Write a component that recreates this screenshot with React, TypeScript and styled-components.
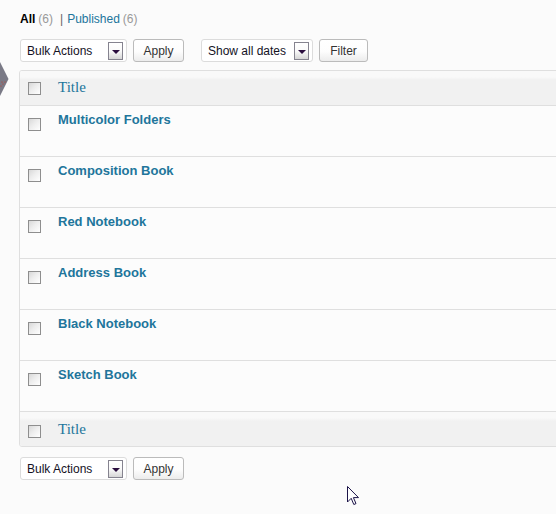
import React from "react";
import styled, { createGlobalStyle } from "styled-components";

const GlobalStyle = createGlobalStyle`
  html, body { margin: 0; padding: 0; background: #fbfbfb; overflow: hidden; }
  body { font-family: "Liberation Sans", Arial, sans-serif; font-size: 12px; color: #333; }
`;

const Page = styled.div`
  position: relative;
  width: 556px;
  height: 514px;
  box-sizing: border-box;
  padding: 12px 0 0 20px;
  overflow: hidden;
`;

const SubSub = styled.div`
  display: flex;
  align-items: baseline;
  height: 14px;
  line-height: 14px;
  font-size: 12px;
`;

const Current = styled.span`
  font-weight: bold;
  color: #000;
`;

const Count = styled.span`
  color: #999;
  margin-left: 3px;
`;

const Sep = styled.span`
  color: #666;
  margin: 0 4px 0 7px;
`;

const Link = styled.a`
  color: #21759b;
  text-decoration: none;
`;

const Toolbar = styled.div<{ $top: number }>`
  display: flex;
  align-items: center;
  height: 23px;
  margin-top: ${(p) => p.$top}px;
`;

const Select = styled.div<{ $w: number; $ml?: number }>`
  display: flex;
  align-items: center;
  justify-content: space-between;
  box-sizing: border-box;
  width: ${(p) => p.$w}px;
  height: 23px;
  margin-left: ${(p) => p.$ml ?? 0}px;
  padding: 0 3px 0 6px;
  border: 1px solid #dcdcdc;
  border-radius: 3px;
  background: #fff;
  color: #14121f;
  font-size: 12px;
`;

const ArrowBox = styled.span`
  display: flex;
  align-items: center;
  justify-content: center;
  box-sizing: border-box;
  width: 15px;
  height: 18px;
  padding-top: 3px;
  border: 1px solid #85838f;
  background: linear-gradient(#ffffff 0, #fafafa 50%, #d6d6d6 100%);
`;

const Triangle = styled.span`
  width: 0;
  height: 0;
  border-left: 4px solid transparent;
  border-right: 4px solid transparent;
  border-top: 4px solid #2a0d3e;
`;

const Button = styled.button<{ $w: number; $ml: number }>`
  box-sizing: border-box;
  width: ${(p) => p.$w}px;
  height: 23px;
  margin-left: ${(p) => p.$ml}px;
  padding: 0;
  border: 1px solid #bbbbbb;
  border-radius: 3px;
  background: linear-gradient(#ffffff 0, #fdfdfd 55%, #ececec 100%);
  font-family: "Liberation Sans", Arial, sans-serif;
  font-size: 12px;
  color: #333;
`;

const Table = styled.div`
  margin: 8px 0 0 -1px;
  width: 560px;
  border: 1px solid #dfdfdf;
  border-radius: 3px;
  background: #fcfcfc;
  overflow: hidden;
`;

const HeadRow = styled.div<{ $foot?: boolean }>`
  display: flex;
  align-items: flex-start;
  box-sizing: border-box;
  height: ${(p) => (p.$foot ? 34 : 35)}px;
  background: linear-gradient(#f9f9f9 0, #f9f9f9 6px, #f1f1f1 9px, #f1f1f1 100%);
  border-bottom: ${(p) => (p.$foot ? "none" : "1px solid #dfdfdf")};
`;

const Row = styled.div`
  display: flex;
  align-items: flex-start;
  box-sizing: border-box;
  height: 51px;
  border-bottom: 1px solid #dfdfdf;
`;

const CheckCell = styled.div<{ $top: number }>`
  box-sizing: border-box;
  width: 38px;
  padding: ${(p) => p.$top}px 0 0 8px;
`;

const Checkbox = styled.span`
  display: block;
  box-sizing: border-box;
  width: 13px;
  height: 13px;
  border: 1px solid #8e8e8e;
  background: linear-gradient(135deg, #d8d8d8 0, #ededed 45%, #ffffff 100%);
`;

const HeadTitle = styled.div<{ $top: number }>`
  padding-top: ${(p) => p.$top}px;
  font-family: "Liberation Serif", "Times New Roman", serif;
  font-size: 15px;
  line-height: 18px;
  color: #21759b;
`;

const RowTitle = styled.a`
  display: block;
  padding-top: 6px;
  font-size: 13px;
  line-height: 16px;
  font-weight: bold;
  color: #21759b;
  text-decoration: none;
`;

const Diamond = styled.svg`
  position: absolute;
  left: 0;
  top: 62px;
`;

const Cursor = styled.svg`
  position: absolute;
  left: 347px;
  top: 486px;
`;

const items = [
  "Multicolor Folders",
  "Composition Book",
  "Red Notebook",
  "Address Book",
  "Black Notebook",
  "Sketch Book",
];

function Actions({ top, withFilter }: { top: number; withFilter?: boolean }) {
  return (
    <Toolbar $top={top}>
      <Select $w={107}>
        <span>Bulk Actions</span>
        <ArrowBox>
          <Triangle />
        </ArrowBox>
      </Select>
      <Button $w={51} $ml={6}>Apply</Button>
      {withFilter && (
        <>
          <Select $w={112} $ml={17}>
            <span>Show all dates</span>
            <ArrowBox>
              <Triangle />
            </ArrowBox>
          </Select>
          <Button $w={49} $ml={6}>Filter</Button>
        </>
      )}
    </Toolbar>
  );
}

export default function App() {
  return (
    <>
      <GlobalStyle />
      <Page>
        <Diamond width="10" height="35" viewBox="0 0 10 35">
          <polygon points="0,0 8.5,17 0,34" fill="#7a7a86" />
          <circle cx="5" cy="20" r="0.6" fill="#c0392b" />
          <circle cx="3" cy="22" r="0.6" fill="#c0392b" />
          <circle cx="1" cy="24" r="0.6" fill="#c0392b" />
          <circle cx="2" cy="20" r="0.6" fill="#c0392b" />
        </Diamond>
        <SubSub>
          <Current>All</Current>
          <Count>(6)</Count>
          <Sep>|</Sep>
          <Link href="#">Published</Link>
          <Count>(6)</Count>
        </SubSub>
        <Actions top={13} withFilter />
        <Table>
          <HeadRow>
            <CheckCell $top={11}>
              <Checkbox />
            </CheckCell>
            <HeadTitle $top={7}>Title</HeadTitle>
          </HeadRow>
          {items.map((name) => (
            <Row key={name}>
              <CheckCell $top={12}>
                <Checkbox />
              </CheckCell>
              <RowTitle href="#">{name}</RowTitle>
            </Row>
          ))}
          <HeadRow $foot>
            <CheckCell $top={13}>
              <Checkbox />
            </CheckCell>
            <HeadTitle $top={8}>Title</HeadTitle>
          </HeadRow>
        </Table>
        <Actions top={10} />
        <Cursor width="13" height="20" viewBox="0 0 13 20">
          <polygon
            points="0.5,0.5 0.5,16 4.2,12.3 6.8,18.5 9,17.6 6.4,11.6 11.5,11.6"
            fill="#ffffff"
            stroke="#1c1448"
            strokeWidth="1"
          />
        </Cursor>
      </Page>
    </>
  );
}
